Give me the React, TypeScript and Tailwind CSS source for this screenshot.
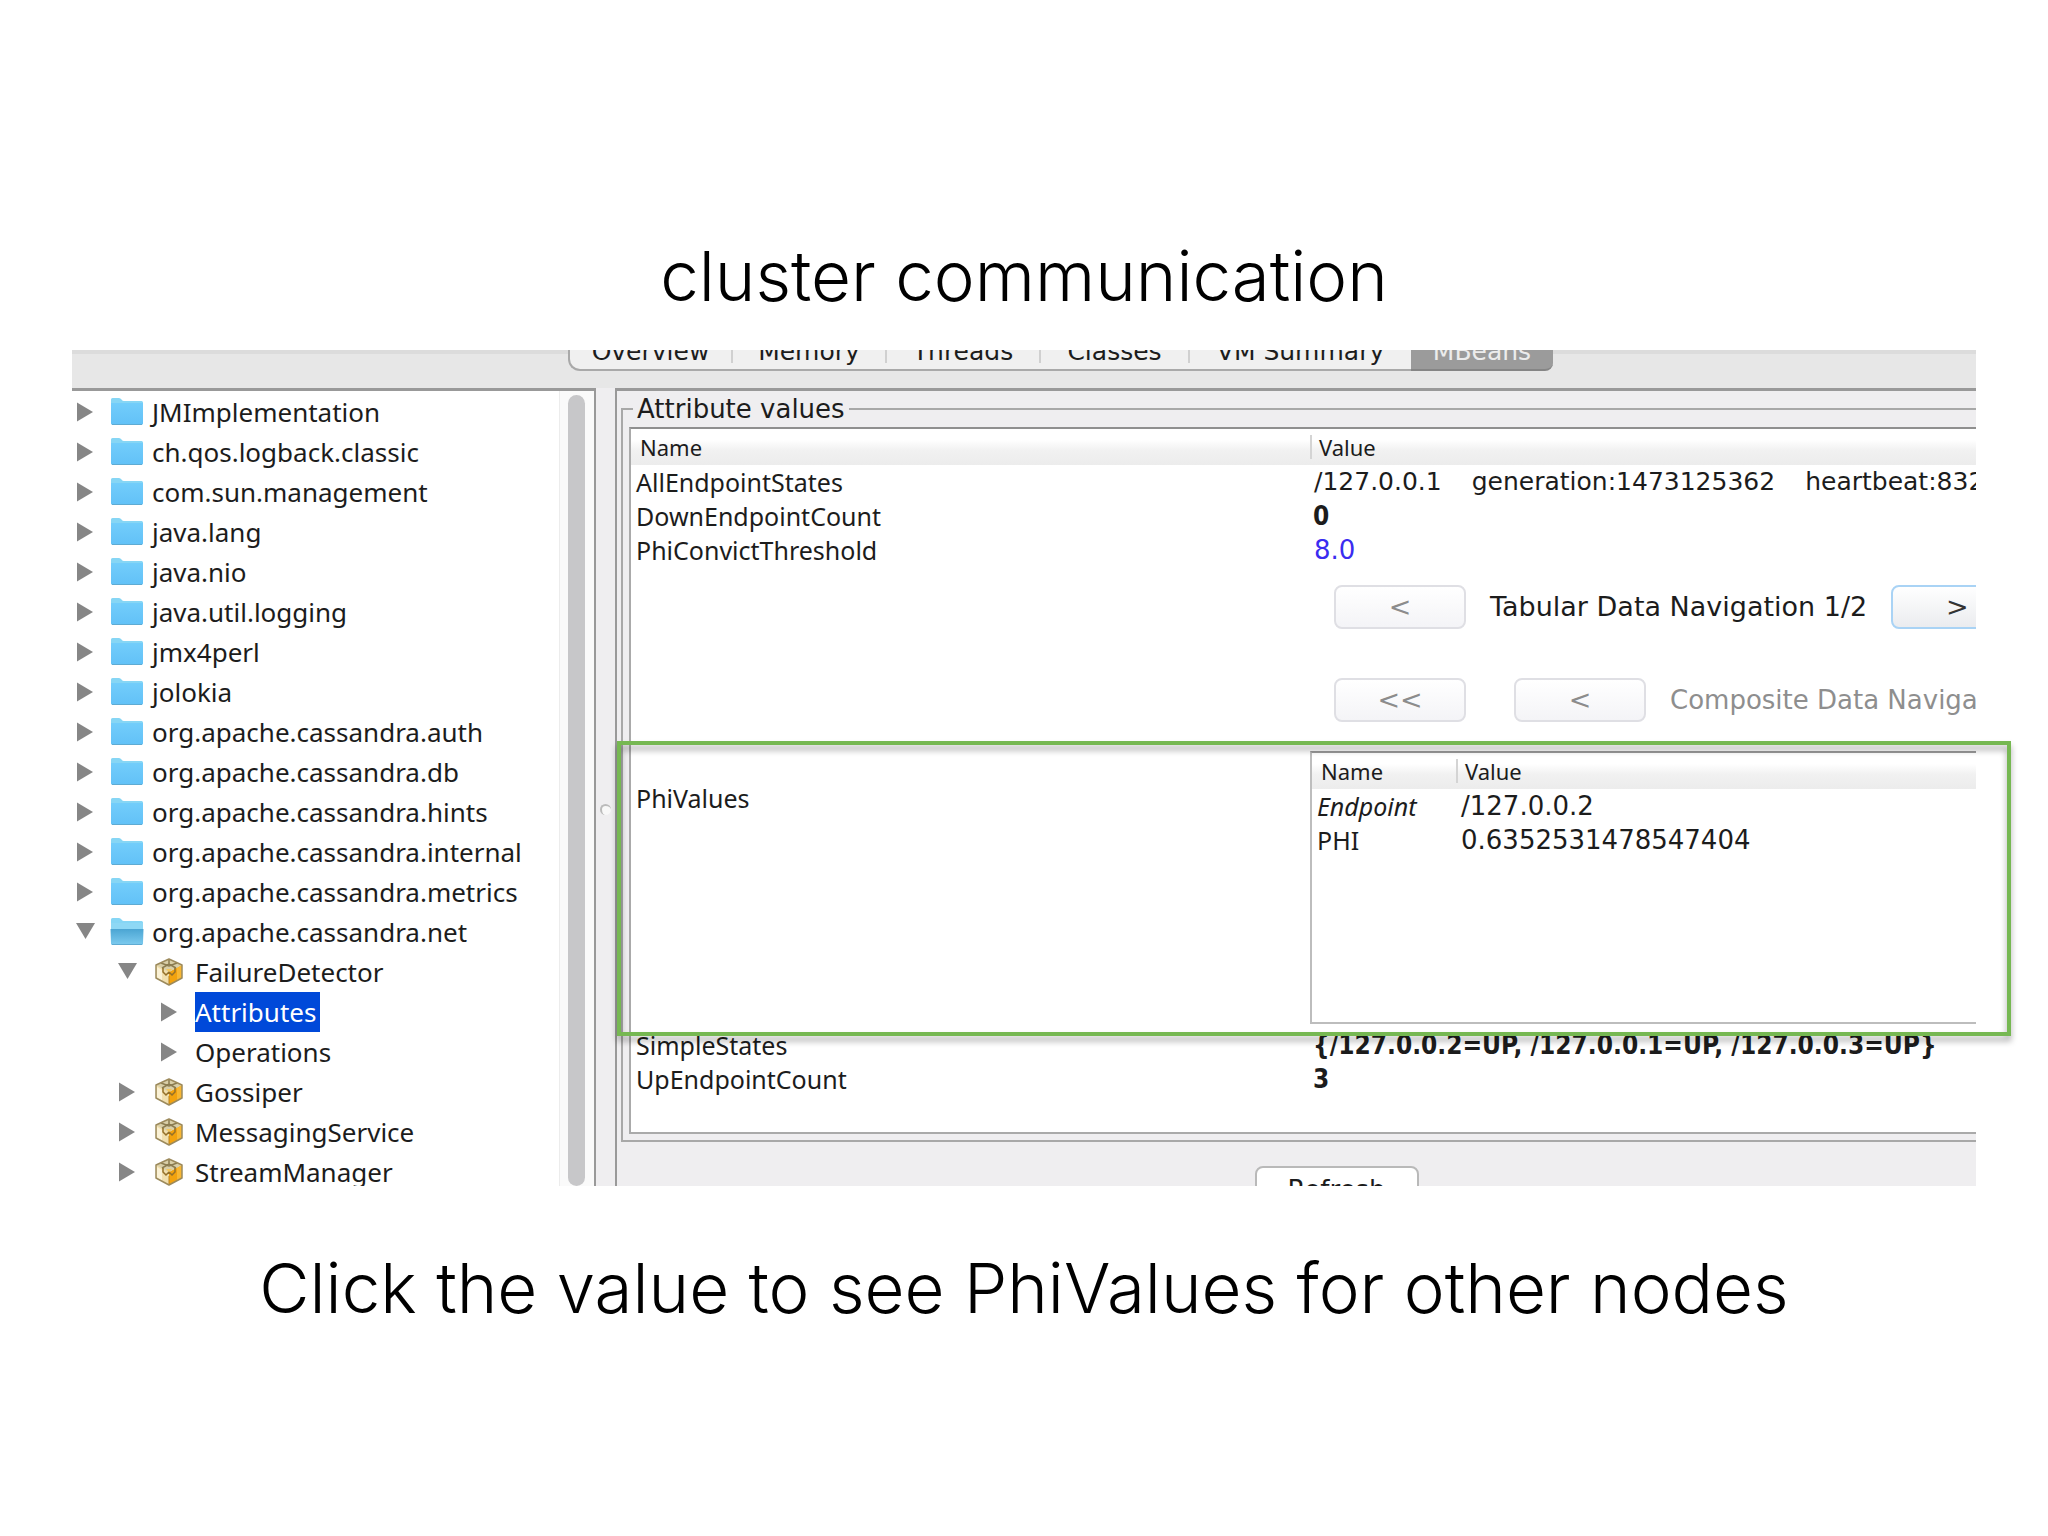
import type { ReactNode } from "react";

type TreeItem = {
  label: string;
  level: number;
  icon?: "folder" | "open" | "bean";
  expanded?: boolean;
  selected?: boolean;
};

const tree: TreeItem[] = [
  { label: "JMImplementation", level: 0, icon: "folder" },
  { label: "ch.qos.logback.classic", level: 0, icon: "folder" },
  { label: "com.sun.management", level: 0, icon: "folder" },
  { label: "java.lang", level: 0, icon: "folder" },
  { label: "java.nio", level: 0, icon: "folder" },
  { label: "java.util.logging", level: 0, icon: "folder" },
  { label: "jmx4perl", level: 0, icon: "folder" },
  { label: "jolokia", level: 0, icon: "folder" },
  { label: "org.apache.cassandra.auth", level: 0, icon: "folder" },
  { label: "org.apache.cassandra.db", level: 0, icon: "folder" },
  { label: "org.apache.cassandra.hints", level: 0, icon: "folder" },
  { label: "org.apache.cassandra.internal", level: 0, icon: "folder" },
  { label: "org.apache.cassandra.metrics", level: 0, icon: "folder" },
  { label: "org.apache.cassandra.net", level: 0, icon: "open", expanded: true },
  { label: "FailureDetector", level: 1, icon: "bean", expanded: true },
  { label: "Attributes", level: 2, selected: true },
  { label: "Operations", level: 2 },
  { label: "Gossiper", level: 1, icon: "bean" },
  { label: "MessagingService", level: 1, icon: "bean" },
  { label: "StreamManager", level: 1, icon: "bean" },
];

const indents = ["pl-1", "pl-[46px]", "pl-[88px]"];

function Disclosure({ open }: { open?: boolean }) {
  return (
    <svg viewBox="0 0 20 20" className="size-5 shrink-0" aria-hidden="true">
      <path d={open ? "M0 1H19L9.500 17Z" : "M1 0.5L17 10L1 19.5Z"} fill="#868686" />
    </svg>
  );
}

function Folder({ open }: { open?: boolean }) {
  return (
    <svg viewBox="0 0 34 30" className="h-[30px] w-[34px] shrink-0" aria-hidden="true">
      <defs>
        <linearGradient id="folder-front" x1="0" y1="0" x2="0" y2="1">
          <stop offset="0" stopColor="#72cdfb" />
          <stop offset="1" stopColor="#62c1f7" />
        </linearGradient>
        <linearGradient id="folder-open" x1="0" y1="0" x2="0" y2="1">
          <stop offset="0" stopColor="#4ba5d3" />
          <stop offset="1" stopColor="#7dcbef" />
        </linearGradient>
      </defs>
      <path d="M1 27V2.500Q1 1 2.500 1H9Q10.500 1 11.500 2.500T14 4H31.500Q33 4 33 5.500V27Z" fill="#86d6f5" />
      <path d="M1 6H33V26Q33 28 31 28H3Q1 28 1 26Z" fill="url(#folder-front)" />
      {open && <path d="M1 6H33V12H1Z" fill="#8ed8f5" />}
      {open && <path d="M0.500 12H33.500L33 26Q33 28 31 28H3Q1 28 1 26Z" fill="url(#folder-open)" />}
      <path d="M2 27.500H32" stroke="#5fabd2" strokeWidth="1" />
    </svg>
  );
}

function Bean() {
  return (
    <svg viewBox="0 0 30 30" className="size-[30px] shrink-0" aria-hidden="true">
      <path d="M15 2L28 8V21L15 28L2 21V8Z" fill="#f1dfae" />
      <path d="M15 15L28 8V21L15 28Z" fill="#f2a20e" />
      <path d="M15 2L28 8L15 15L2 8Z" fill="#d9cfa8" />
      <path d="M23 11L28 8V21L23 24Z" fill="#f8b733" />
      <path d="M3 10L8 13V24L3 21Z" fill="#fbf2d6" />
      <path d="M7 6L15 9L23 6M8 11L15 7L22 11M15 3V8" fill="none" stroke="#8b7c50" strokeWidth="1.500" />
      <path d="M9 11V15L12 18L15 15L18 18L21 15V11" fill="none" stroke="#94702a" strokeWidth="1.500" />
      <path d="M12 12H18L15 15Z" fill="#f6c85c" />
      <path d="M15 19V28" stroke="#b98422" strokeWidth="1" />
      <path d="M15 2L28 8V21L15 28L2 21V8Z" fill="none" stroke="#9c8a5c" strokeWidth="1.500" strokeLinejoin="round" />
    </svg>
  );
}

function MBeanTree() {
  return (
    <ul className="min-w-0 flex-1 pt-px font-['Noto_Sans',sans-serif] text-[26px]">
      {tree.map((item) => (
        <li key={item.label} className={`flex h-10 items-center ${indents[item.level]}`}>
          <Disclosure open={item.expanded} />
          {item.icon && (
            <span className={`flex shrink-0 ${item.level === 0 ? "ml-[14px] w-[34px]" : "ml-4 w-[30px]"}`}>
              {item.icon === "bean" ? <Bean /> : <Folder open={item.icon === "open"} />}
            </span>
          )}
          <span
            className={`flex h-10 items-center ${item.icon ? (item.level === 0 ? "ml-2" : "ml-[11px]") : "ml-[15px]"} ${
              item.selected ? "bg-[#0049d9] pr-1 text-white" : ""
            }`}
          >
            {item.label}
          </span>
        </li>
      ))}
    </ul>
  );
}

function NavButton({ children, focus, disabled }: { children: ReactNode; focus?: boolean; disabled?: boolean }) {
  return (
    <button
      type="button"
      disabled={disabled}
      className={`h-11 w-[132px] shrink-0 rounded-lg border-2 bg-linear-to-b from-white text-center ${
        focus ? "border-[#a9d3f5] to-[#ebecef] text-[#333]" : "border-[#dfdfe4] to-[#f4f4f7] text-[#8c8c8c]"
      }`}
    >
      {children}
    </button>
  );
}

function HeaderCell({ children, divided }: { children: ReactNode; divided?: boolean }) {
  return (
    <th className="h-9 bg-linear-to-b from-white from-30% via-[#f1f1f1] via-60% to-[#ececec] p-0 text-left align-middle font-['Noto_Sans',sans-serif] text-[22px] font-normal">
      <span className={`block h-6 leading-6 ${divided ? "border-l-2 border-[#d4d4d4] pl-[7px]" : "pl-[9px]"}`}>
        {children}
      </span>
    </th>
  );
}

function NameCell({ children }: { children: ReactNode }) {
  return <td className="p-0 pl-[5px] align-middle font-['Noto_Sans',sans-serif] text-[25px]">{children}</td>;
}

function BoldCell({ children }: { children: ReactNode }) {
  return (
    <td className="p-0 pl-[3px] font-['DejaVu_Sans_Condensed','Noto_Sans',sans-serif] text-[26px] font-bold">
      {children}
    </td>
  );
}

function PhiTable() {
  return (
    <div className="h-[273px] border-2 border-r-0 border-[#bdbdbd] border-t-[#999]">
      <table className="w-full table-fixed border-collapse">
        <colgroup>
          <col className="w-[144px]" />
          <col />
        </colgroup>
        <thead>
          <tr>
            <HeaderCell>Name</HeaderCell>
            <HeaderCell divided>Value</HeaderCell>
          </tr>
        </thead>
        <tbody className="text-[26px]">
          <tr className="h-[34px]">
            <NameCell>
              <em>Endpoint</em>
            </NameCell>
            <td className="p-0 pl-[5px]">/127.0.0.2</td>
          </tr>
          <tr className="h-[34px]">
            <NameCell>PHI</NameCell>
            <td className="p-0 pl-[5px]">0.6352531478547404</td>
          </tr>
        </tbody>
      </table>
    </div>
  );
}

function AttributeTable() {
  return (
    <table className="w-full table-fixed border-collapse">
      <colgroup>
        <col className="w-[679px]" />
        <col />
      </colgroup>
      <thead>
        <tr>
          <HeaderCell>Name</HeaderCell>
          <HeaderCell divided>Value</HeaderCell>
        </tr>
      </thead>
      <tbody>
        <tr className="h-[34px]">
          <NameCell>AllEndpointStates</NameCell>
          <td className="p-0 pl-1">
            <span className="flex gap-[30px]">
              <span>/127.0.0.1</span>
              <span>generation:1473125362</span>
              <span>heartbeat:832</span>
            </span>
          </td>
        </tr>
        <tr className="h-[34px]">
          <NameCell>DownEndpointCount</NameCell>
          <BoldCell>0</BoldCell>
        </tr>
        <tr className="h-[34px]">
          <NameCell>PhiConvictThreshold</NameCell>
          <td className="p-0 pl-1 text-[26px] text-[#3a2cf0]">8.0</td>
        </tr>
        <tr className="h-[461px]">
          <NameCell>PhiValues</NameCell>
          <td className="p-0 align-top">
            <div className="flex flex-col pt-[18px] text-[27px]">
              <div className="ml-6 flex h-11 items-center">
                <NavButton disabled>&lt;</NavButton>
                <span className="ml-6">Tabular Data Navigation 1/2</span>
                <span className="ml-6 flex">
                  <NavButton focus>&gt;</NavButton>
                </span>
              </div>
              <div className="mt-[49px] mb-[29px] ml-6 flex h-11 items-center">
                <NavButton disabled>&lt;&lt;</NavButton>
                <span className="ml-12 flex">
                  <NavButton disabled>&lt;</NavButton>
                </span>
                <span className="ml-6 text-[26px] text-[#8e8e8e]">Composite Data Navigation</span>
              </div>
            </div>
            <PhiTable />
          </td>
        </tr>
        <tr className="h-[34px]">
          <NameCell>SimpleStates</NameCell>
          <BoldCell>{"{/127.0.0.2=UP, /127.0.0.1=UP, /127.0.0.3=UP}"}</BoldCell>
        </tr>
        <tr className="h-[34px]">
          <NameCell>UpEndpointCount</NameCell>
          <BoldCell>3</BoldCell>
        </tr>
      </tbody>
    </table>
  );
}

const tabs = [
  { label: "Overview", width: "w-[163px]" },
  { label: "Memory", width: "w-[154px]" },
  { label: "Threads", width: "w-[154px]" },
  { label: "Classes", width: "w-[149px]" },
  { label: "VM Summary", width: "w-[221px]" },
];

function TabBar() {
  return (
    <nav className="flex h-[38px] items-end border-t-4 border-[#dcdcdc] pb-[17px] pl-[496px] text-[25px] leading-7">
      <div className="flex h-[49px] shrink-0 items-end">
        <div className="flex h-[49px] rounded-bl-xl border-b-2 border-l-2 border-[#a9a9a9] bg-[#f0f0f0] pt-2">
          {tabs.map((tab, index) => (
            <button
              key={tab.label}
              type="button"
              className={`h-[33px] pt-2 ${tab.width} ${index < tabs.length - 1 ? "border-r-2 border-[#d0d0d0]" : ""}`}
            >
              {tab.label}
            </button>
          ))}
        </div>
        <button
          type="button"
          className="h-[49px] w-[142px] rounded-br-lg border-b-2 border-[#858585] bg-[#9b9b9b] pt-3 text-[#ececec]"
        >
          MBeans
        </button>
      </div>
    </nav>
  );
}

export default function App() {
  return (
    <main className="flex min-h-screen flex-col bg-white font-['DejaVu_Sans',sans-serif] text-[25px] leading-8 text-[#1c1c1c]">
      <h1 className="pt-[226px] text-center font-['Inter',sans-serif] text-[69px] leading-[100px] font-light text-black">
        cluster communication
      </h1>
      <div className="relative mx-[72px] mt-6">
        <section className="flex h-[836px] flex-col overflow-hidden bg-[#e7e7e7] whitespace-nowrap">
          <TabBar />
          <div className="flex min-h-0 flex-1">
            <aside className="flex w-[524px] shrink-0 border-t-[3px] border-r-2 border-[#999] bg-white">
              <MBeanTree />
              <div className="flex w-[35px] border-l border-[#ececec] bg-[#fafafa] pt-1 pl-2">
                <div className="h-[791px] w-[17px] rounded-full bg-[#c7c7c9]" />
              </div>
            </aside>
            <div className="flex w-[19px] shrink-0 flex-col items-start bg-[#efeef0] pt-[416px] pl-1">
              <span className="size-[11px] rounded-full border-t-2 border-l-2 border-[#bbb] bg-[#f8f8f8]" />
            </div>
            <div className="flex min-w-0 flex-1 flex-col border-t-[3px] border-l-2 border-[#999] bg-[#efeef0]">
              <fieldset className="mt-1 ml-1 min-w-0 border-2 border-r-0 border-[#a8a8a8] pb-[6px] pl-[6px]">
                <legend className="ml-1 px-1 text-[26px] leading-7">Attribute values</legend>
                <div className="mt-1 h-[707px] overflow-hidden border-2 border-r-0 border-[#aaa] border-t-[#8f8f8f] bg-white">
                  <AttributeTable />
                </div>
              </fieldset>
              <div className="flex justify-center pt-6 pl-20">
                <button
                  type="button"
                  className="h-12 w-[164px] rounded-lg border-2 border-[#b9b9b9] bg-white text-center text-[26px]"
                >
                  Refresh
                </button>
              </div>
            </div>
          </div>
        </section>
        <div className="pointer-events-none absolute top-[391px] -right-[35px] left-[545px] h-[295px] border-4 border-[#76b852] drop-shadow-[0_5px_3px_rgba(0,0,0,0.35)]" />
      </div>
      <p className="mt-[52px] text-center font-['Inter',sans-serif] text-[69px] leading-[100px] font-light text-black">
        Click the value to see PhiValues for other nodes
      </p>
    </main>
  );
}
